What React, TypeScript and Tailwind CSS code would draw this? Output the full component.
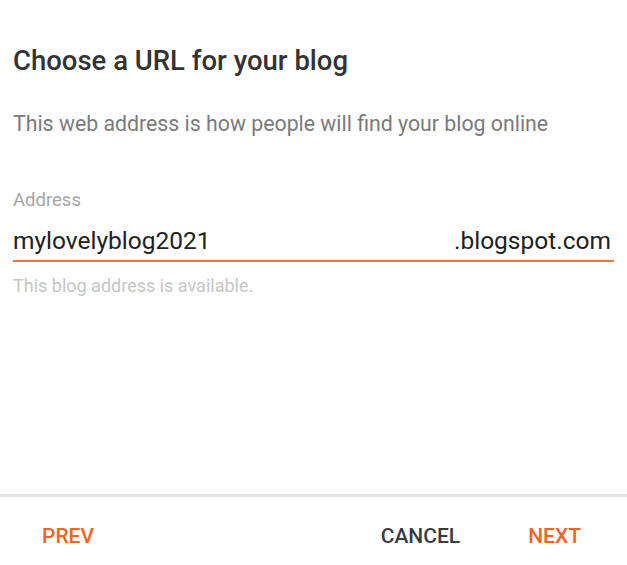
export default function App() {
  return (
    <div className="w-[627px] h-[565px] bg-white flex flex-col" style={{ fontFamily: "Roboto, 'Noto Sans', sans-serif" }}>
      <div className="flex-1 px-[13px]">
        <h1 className="pt-[44px] text-[27.5px] leading-[34px] font-medium text-[#333333]">Choose a URL for your blog</h1>
        <p className="mt-[32px] text-[21.3px] leading-[28px] text-[#7a7a7a]">This web address is how people will find your blog online</p>
        <div className="mt-[50px] text-[18.5px] leading-[24px] text-[#a6a6a6]">Address</div>
        <div className="mt-[14px] flex items-end justify-between border-b-2 border-[#f0763f] pb-[4px] pr-[3px]">
          <span className="text-[24.5px] leading-[30px] text-[#212121]">mylovelyblog2021</span>
          <span className="text-[24.5px] leading-[30px] text-[#212121]">.blogspot.com</span>
        </div>
        <div className="mt-[12px] text-[18px] leading-[24px] text-[#c6c6c6]">This blog address is available.</div>
      </div>
      <div className="h-[3px] bg-[#e2e2e2]" />
      <div className="h-[68px] pt-[27px] flex items-start pl-[42px] pr-[46px] text-[21px] leading-[24px] font-medium">
        <span className="text-[#f4641c]">PREV</span>
        <span className="ml-auto text-[#3c3c3c]">CANCEL</span>
        <span className="ml-[68px] text-[#f4641c]">NEXT</span>
      </div>
    </div>
  );
}
